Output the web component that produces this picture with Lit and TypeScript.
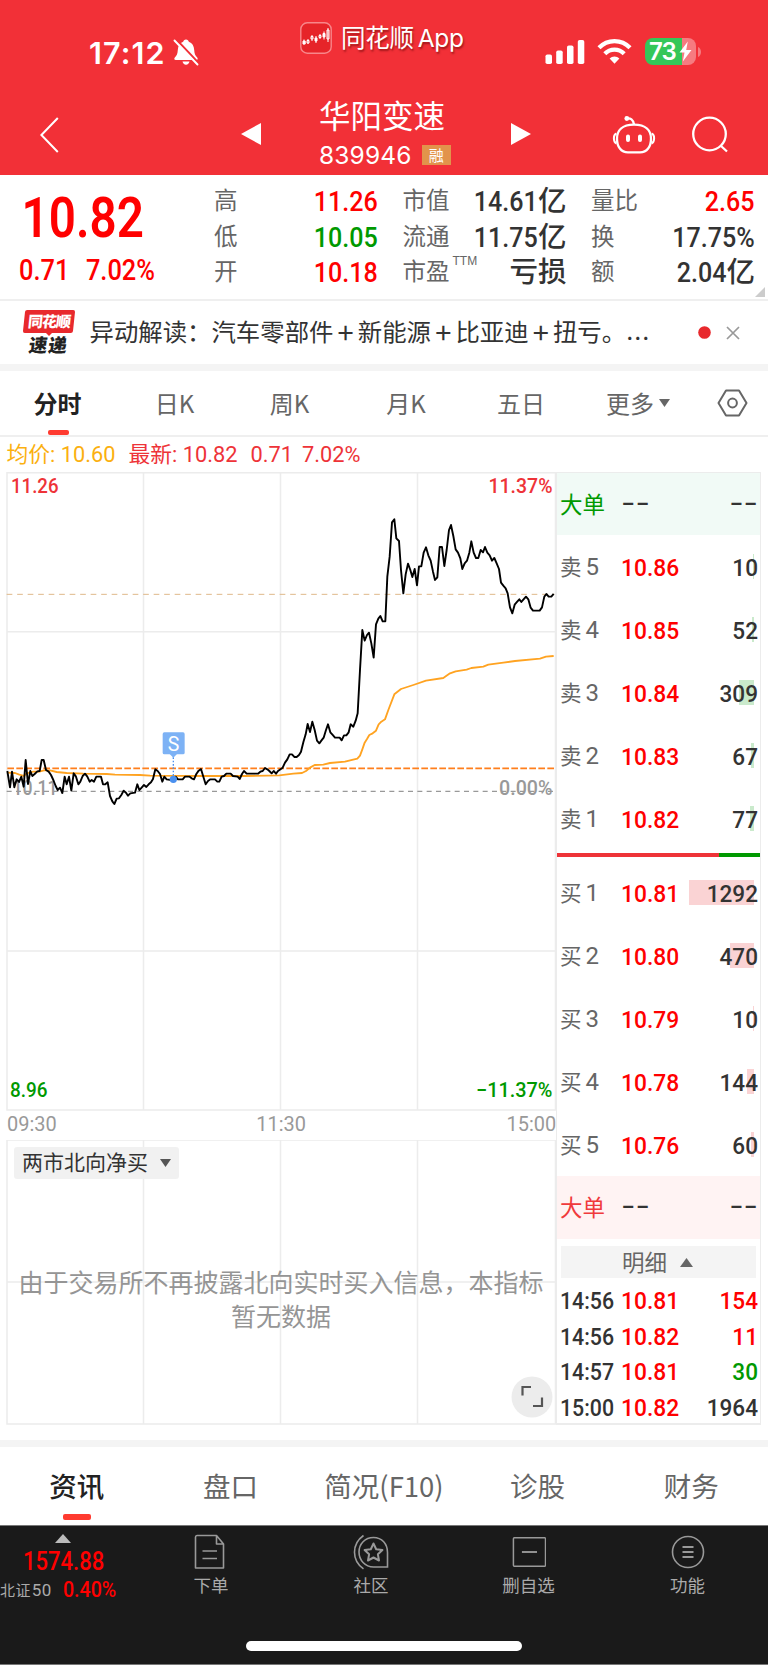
import { LitElement, html, svg, css } from "lit";
import { customElement } from "lit/decorators.js";
import { classMap } from "lit/directives/class-map.js";

// Price and average series, in thirds of a pixel inside the price chart.
const PRICE =
  "22,903 30,952 36,905 43,952 50,928 57,936 64,920 71,950 77,870 84,942 91,903 97,918 104,912 112,904 119,903 125,870 131,870 138,900 146,905 153,915 160,930 167,948 173,960 180,953 187,969 194,920 200,943 207,920 214,962 221,910 228,920 235,943 241,935 248,918 255,911 262,920 269,935 275,930 282,935 289,920 303,920 309,943 316,943 323,937 330,978 337,994 343,1002 350,986 357,985 364,975 371,962 378,968 384,977 391,970 405,968 412,943 418,960 425,953 432,945 439,951 446,943 453,937 459,927 466,898 473,903 480,912 487,935 493,920 500,928 514,930 520,928 527,920 534,928 548,928 555,920 569,920 575,925 582,928 589,912 596,902 603,897 610,920 617,943 624,933 631,928 645,928 652,935 658,935 665,920 672,918 679,911 692,911 699,918 713,920 719,927 726,912 732,903 740,911 774,911 781,905 788,903 795,894 802,898 808,903 815,910 821,903 828,911 834,903 848,893 855,878 862,868 869,853 876,853 883,861 890,861 897,855 903,845 910,817 917,793 923,762 930,786 937,755 944,780 951,812 958,820 964,812 971,803 978,780 984,763 991,787 998,795 1005,803 1019,803 1025,811 1032,796 1039,796 1046,787 1052,763 1060,770 1067,752 1073,730 1080,600 1087,480 1094,512 1101,495 1107,488 1114,520 1121,563 1128,463 1135,446 1141,438 1148,454 1156,454 1162,320 1169,260 1176,157 1183,148 1189,205 1197,213 1203,300 1210,370 1217,313 1224,281 1231,300 1237,321 1244,297 1251,346 1257,289 1264,289 1271,248 1278,232 1285,256 1292,272 1299,305 1305,330 1312,322 1319,231 1326,231 1333,288 1340,240 1347,180 1353,165 1360,198 1367,238 1374,248 1381,265 1387,297 1394,280 1401,272 1408,248 1414,214 1421,248 1428,264 1435,264 1442,240 1449,247 1455,231 1462,248 1469,256 1476,272 1483,264 1490,280 1497,297 1503,338 1510,347 1517,355 1523,370 1530,412 1537,430 1544,404 1551,396 1558,388 1564,396 1578,380 1585,388 1592,413 1599,422 1619,422 1626,412 1633,380 1639,372 1646,380 1654,380 1661,372";
const AVERAGE =
  "22,908 45,909 58,914 71,918 80,910 100,905 118,905 132,901 150,901 170,906 200,909 250,911 320,912 345,914 420,915 450,917 620,918 736,918 838,916 880,911 906,909 918,903 930,893 944,885 970,884 990,879 1035,875 1072,866 1080,857 1087,838 1094,818 1101,807 1108,795 1118,790 1128,782 1136,763 1144,755 1155,748 1165,720 1183,673 1203,657 1240,645 1278,632 1330,624 1350,610 1367,604 1400,599 1414,594 1450,590 1465,584 1510,578 1545,573 1620,566 1638,560 1661,558";

const ASKS = [
  ["5", "10.86", "10", 1], ["4", "10.85", "52", 2], ["3", "10.84", "309", 15],
  ["2", "10.83", "67", 3.3], ["1", "10.82", "77", 4],
] as const;
const BIDS = [
  ["1", "10.81", "1292", 65], ["2", "10.80", "470", 24], ["3", "10.79", "10", 1],
  ["4", "10.78", "144", 7], ["5", "10.76", "60", 3],
] as const;
const TRADES = [
  ["14:56", "10.81", "154", "up"], ["14:56", "10.82", "11", "up"],
  ["14:57", "10.81", "30", "down"], ["15:00", "10.82", "1964", ""],
] as const;

const shared = css`
  :host { display: block; }
  * { box-sizing: border-box; }
  svg { display: block; flex: none; }
  .up { color: #ff0000; }
  .down { color: #009900; }
`;

@customElement("status-header")
export class StatusHeader extends LitElement {
  static styles = [shared, css`
    .head { height: 174.500px; background: #f23037; color: #fff; overflow: hidden; }
    .status { display: flex; align-items: flex-start; height: 84px; padding-left: 89px; }
    .time { width: 84px; margin-top: 34.500px; font: 600 30.500px/36px Inter, sans-serif; letter-spacing: 1.1px; white-space: nowrap; }
    .bell { margin-top: 38px; }
    .appicon { margin: 22px 0 0 100px; }
    .appname { width: 124px; margin: 20px 0 0 9px; font: 400 24.500px/36px Inter, "Noto Sans CJK SC", sans-serif; letter-spacing: -0.3px; word-spacing: -2.500px; white-space: nowrap; text-shadow: 1px 2px 2px rgba(90, 0, 0, .55); }
    .signal { margin: 39.500px 0 0 80px; }
    .wifi { margin: 38px 0 0 12px; }
    .battery { position: relative; width: 51px; height: 27px; margin: 38px 0 0 13px; border-radius: 8px; background: linear-gradient(90deg, #34c759 73%, #f67b80 73%); }
    .pct { display: block; padding-left: 4px; font: 600 24px/27px Inter, sans-serif; letter-spacing: -1px; }
    .bolt { position: absolute; left: 34px; top: 3px; }
    .nub { margin: 47px 0 0 2px; }
    .nav { display: flex; align-items: flex-start; height: 90px; }
    .back { margin: 33px 0 0 39px; }
    .prev { margin: 39px 0 0 182px; }
    .title { width: 250px; }
    .name { height: 48px; margin: 6px 0 0 58px; font: 400 31.500px/48px "Noto Sans CJK SC", sans-serif; }
    .codes { display: flex; align-items: center; height: 22px; margin: 6px 0 0 58px; }
    .code { font: 400 24.500px/22px Inter, sans-serif; width: 103px; letter-spacing: 0.15px; }
    .tag { width: 28.500px; height: 20px; background: #e2934b; font: 400 15px/20px "Noto Sans CJK SC", sans-serif; text-align: center; }
    .next { margin-top: 39px; }
    .bot { margin: 31px 0 0 81px; }
    .find { margin: 32px 0 0 36px; }
  `];
  render() {
    return html`<div class="head">
      <div class="status">
        <div class="time">17:12</div>
        <svg class="bell" width="27" height="28" viewBox="0 0 27 28">
          <path fill="#fff" d="M13 1.5c-1.6 0-2.6 1-2.8 2.3C6.7 5 5 8 4.8 12c-.2 4-1 5.500-3 7.600-1 1.200-.5 2.400 1 2.400h20.400c1.500 0 2-1.200 1-2.400-2-2.100-2.800-3.600-3-7.600C21 8 19.300 5 15.800 3.800 15.600 2.500 14.600 1.500 13 1.500zM9.500 23.500h7c-.4 2-1.700 3.200-3.500 3.200s-3.100-1.200-3.500-3.200z"/>
          <path stroke="#f23037" stroke-width="2.2" d="M3.500 1.800 27 26.500"/><path stroke="#fff" stroke-width="1.900" stroke-linecap="round" d="M1.500 2.500 24.500 26.500"/>
        </svg>
        <svg class="appicon" width="32" height="32" viewBox="0 0 32 32">
          <rect x=".8" y=".8" width="30.400" height="30.400" rx="6.500" fill="#e62429" stroke="#f8868a" stroke-width="1.400"/>
          <g stroke="#fff" stroke-width="1"><path fill="#fff" d="M3 19h2.200v3H3zM15 16h2v3h-2zM23 11.500h2v3.500h-2z"/><path fill="none" d="M8 17v5M7 18.500h2v2.500H7zM12 13v6M11 14.500h2v2.500h-2zM20 12v5M19 13.500h2v2h-2zM28 6v14M27 8h2v9h-2zM4 17.500v5M16 14v7M24 9.500v8"/></g>
        </svg>
        <div class="appname">同花顺 App</div>
        <svg class="signal" width="40" height="24" viewBox="0 0 40 24" fill="#fff">
          <rect x="0.500" y="14.500" width="6.500" height="9.500" rx="1.800"/><rect x="11.200" y="10.500" width="6.500" height="13.500" rx="1.800"/><rect x="22" y="5.500" width="6.500" height="18.500" rx="1.800"/><rect x="32.800" y="0" width="6.500" height="24" rx="1.800"/>
        </svg>
        <svg class="wifi" width="35" height="26" viewBox="0 0 35 26" fill="none" stroke="#fff">
          <path stroke-width="4.200" d="M2 9.800C10.500.9 24.500.9 33 9.800"/><path stroke-width="4.200" d="M7.800 15.700c5.400-5.500 14-5.500 19.400 0"/><path fill="#fff" stroke="none" d="M17.500 25.800l-4.900-5.200c2.700-2.700 7.100-2.700 9.800 0z"/>
        </svg>
        <div class="battery"><span class="pct">73</span>
          <svg class="bolt" width="13" height="21" viewBox="0 0 13 21"><path fill="#fff" d="M8.800.5.5 11.500h5L3.800 20.500 12.500 9H7.200z"/></svg>
        </div>
        <svg class="nub" width="4" height="10"><path fill="#f67b80" d="M0 0c4 1.500 4 8.500 0 10z"/></svg>
      </div>
      <div class="nav">
        <svg class="back" width="20" height="36" viewBox="0 0 20 36"><path d="M18.800 1 2.400 18l16.400 17" fill="none" stroke="#fff" stroke-width="2"/></svg>
        <svg class="prev" width="20" height="22"><path fill="#fff" d="M20 0v22L0 11z"/></svg>
        <div class="title">
          <div class="name">华阳变速</div>
          <div class="codes"><span class="code">839946</span><span class="tag">融</span></div>
        </div>
        <svg class="next" width="20" height="22"><path fill="#fff" d="M0 0v22l20-11z"/></svg>
        <svg class="bot" width="44" height="40" viewBox="0 0 44 40" fill="none" stroke="#fff" stroke-width="2.300">
          <path d="M14.500 3.600c4-.8 6.800 1 7.500 5.900"/><circle cx="14.800" cy="3.500" r="2.400" fill="#fff" stroke="none"/>
          <path d="M22 9.700c12 0 17 6 17 14s-4 13.700-11 13.700H16c-7 0-11-5.700-11-13.700s5-14 17-14z"/>
          <path stroke-width="2" d="M4.500 18.500C1 19.500 1 27 4.500 28.500M39.500 18.500c3.500 1 3.500 8.500 0 10"/>
          <path stroke-width="4" stroke-linecap="round" d="M16 21.500v3.600M28 21.500v3.600"/>
        </svg>
        <svg class="find" width="38" height="38" viewBox="0 0 38 38" fill="none" stroke="#fff" stroke-width="2.300"><circle cx="17.500" cy="18" r="16.300"/><path d="M28.500 29.500l6.500 6"/></svg>
      </div>
    </div>`;
  }
}

@customElement("quote-summary")
export class QuoteSummary extends LitElement {
  static styles = [shared, css`
    .quote { position: relative; display: grid; grid-template-columns: 188.500px 163px 163px 163px; column-gap: 25.500px; height: 124.500px; padding-top: 9.500px; font-family: Roboto, "Noto Sans CJK SC", sans-serif; color: #333; }
    .last { padding: 1px 0 0 19px; white-space: nowrap; }
    .big { font-size: 55px; font-weight: 600; line-height: 66px; transform: scaleX(.865); transform-origin: 0 50%; padding-left: 3px; }
    .chg { display: flex; gap: 19px; font-size: 29px; font-weight: 500; line-height: 36px; margin-top: 1px; transform: scaleX(.875); transform-origin: 0 50%; }
    .cell { display: flex; justify-content: space-between; height: 35.500px; line-height: 35.500px; }
    .label { flex: none; font-size: 23.500px; color: #666; }
    .val { display: flex; min-width: 0; justify-content: flex-end; white-space: nowrap; font-size: 28.500px; font-weight: 500; margin-right: -1px; }
    .num { transform: scaleX(.88); transform-origin: 100% 50%; }
    .ttm { font-size: 12px; line-height: 12px; vertical-align: 15px; margin-left: 3px; font-family: "Liberation Sans", sans-serif; }
    .corner { position: absolute; left: 755px; top: 112px; }
    .rule { height: 2px; background: #efefef; }
  `];
  cell(label: unknown, num: string, unit = "", tone = "") {
    return html`<div class="cell"><span class="label">${label}</span><span class="val ${tone}">${num ? html`<span class="num">${num}</span>` : ""}${unit ? html`<span>${unit}</span>` : ""}</span></div>`;
  }
  render() {
    return html`<div class="quote">
      <div class="last up"><div class="big">10.82</div><div class="chg"><span>0.71</span><span>7.02%</span></div></div>
      <div>${this.cell("高", "11.26", "", "up")}${this.cell("低", "10.05", "", "down")}${this.cell("开", "10.18", "", "up")}</div>
      <div>${this.cell("市值", "14.61", "亿")}${this.cell("流通", "11.75", "亿")}${this.cell(html`市盈<span class="ttm">TTM</span>`, "", "亏损")}</div>
      <div>${this.cell("量比", "2.65", "", "up")}${this.cell("换", "17.75%")}${this.cell("额", "2.04", "亿")}</div>
      <svg class="corner" width="10" height="10"><path fill="#ccc" d="M10 0v10H0z"/></svg>
    </div><div class="rule"></div>`;
  }
}

@customElement("news-flash")
export class NewsFlash extends LitElement {
  static styles = [shared, css`
    .row { display: flex; align-items: center; height: 63px; padding-left: 22px; }
    .logo { display: flex; flex-direction: column; align-items: center; width: 53px; height: 45px; }
    .brand { width: 50px; height: 23px; border-radius: 2px; background: #e8292d; color: #fff; font: 900 15px/22px "Noto Sans CJK SC", sans-serif; transform: skewX(-6deg); text-align: center; letter-spacing: -1px; }
    .tip { margin-top: -1px; }
    .send { color: #222; font: 900 18.500px/18px "Noto Sans CJK SC", sans-serif; transform: skewX(-8deg); margin-top: -1px; letter-spacing: 1px; }
    .text { display: flex; flex: none; width: 623px; height: 36px; margin-top: -3px; padding-left: 14.500px; font: 400 24.400px/36px "Noto Sans CJK SC", sans-serif; color: #333; white-space: pre; }
    .plus { width: 24.400px; text-align: center; font-size: 29px; }
    .dots { font-family: Inter, sans-serif; letter-spacing: 1px; }
    .band { height: 7px; background: #f4f4f4; }
    .close { margin-left: 15px; }
  `];
  render() {
    const parts = ["异动解读：汽车零部件", "新能源", "比亚迪", "扭亏。"];
    return html`<div class="row">
      <div class="logo"><div class="brand">同花顺</div><svg class="tip" width="8" height="4"><path fill="#e8292d" d="M0 0h8L4 4z"/></svg><div class="send">速递</div></div>
      <div class="text">${parts.map((p, i) => html`${i ? html`<span class="plus">+</span>` : ""}<span>${p}</span>`)}<span class="dots">...</span></div>
      <svg width="13" height="13"><circle cx="6.500" cy="6.500" r="6.300" fill="#e8292d"/></svg>
      <svg class="close" width="14" height="14"><path d="M1 1l12 12M13 1 1 13" stroke="#999" stroke-width="1.700"/></svg>
    </div><div class="band"></div>`;
  }
}

@customElement("period-tabs")
export class PeriodTabs extends LitElement {
  static styles = [shared, css`
    .tabs { display: grid; grid-template-columns: 115px 119px 111px 122px 108px 126px 63px; height: 66px; border-bottom: 2px solid #efefef; font: 400 24px/66px "Noto Sans CJK SC", sans-serif; color: #666; }
    .tab { display: flex; justify-content: center; align-items: center; height: 64px; position: relative; }
    .on { color: #222; font-weight: 600; }
    .on::after { content: ""; position: absolute; left: 47.500px; bottom: 0; width: 21.500px; height: 5px; border-radius: 2px; background: #ff3b30; }
    .arrow { margin-left: 5px; }
  `];
  render() {
    return html`<div class="tabs">
      ${["分时", "日K", "周K", "月K", "五日"].map((t, i) => html`<div class=${classMap({ tab: true, on: i === 0 })}>${t}</div>`)}
      <div class="tab">更多<svg class="arrow" width="11" height="8"><path fill="#666" d="M0 0h11L5.500 8z"/></svg></div>
      <div class="tab"><svg width="31" height="28" viewBox="0 0 31 28" fill="none" stroke="#666" stroke-width="2"><path stroke-linejoin="round" d="M9 1.500h13L29.500 14 22 26.500H9L1.500 14z"/><circle cx="15.500" cy="14" r="4.400"/></svg></div>
    </div>`;
  }
}

@customElement("price-chart")
export class PriceChart extends LitElement {
  static styles = [shared, css`
    :host { width: 556px; }
    text { font-family: Roboto, sans-serif; }
    .lab { font-size: 20px; font-weight: 500; }
    .axis { display: flex; justify-content: space-between; height: 28px; padding: 0 0 0 7px; font: 400 21px/25px Roboto, sans-serif; color: #999; }
    .axis span { transform: scaleX(.95); }
    .axis span:first-child { transform-origin: 0 50%; }
    .axis span:last-child { transform-origin: 100% 50%; }
    .north { position: relative; height: 286px; }
    .grid { position: absolute; inset: 0; }
    .chip { position: relative; display: flex; align-items: center; width: 164.500px; height: 32px; margin-left: 14px; background: rgba(240, 240, 240, .92); border-radius: 3px; padding-left: 8px; font: 400 21px/29px "Noto Sans CJK SC", sans-serif; color: #333; }
    .chip span { margin-top: -3px; }
    .chip svg { margin-left: 12px; }
    .pad { height: 7px; }
    .msg { position: relative; margin: 84.500px 0 0 6px; text-align: center; color: #959595; font: 400 25px/34.500px "Noto Sans CJK SC", sans-serif; white-space: nowrap; }
    .expand { position: absolute; left: 511px; top: 236px; }
  `];
  render() {
    const cols = [143.5, 280.5, 417.5];
    return html`
      <svg width="556" height="642" viewBox="0 0 556 642">
        <path fill="none" stroke="#ececec" stroke-width="1.500" d="M7 2.700H555.500V640H7zM7 161.800H555.500M7 481H555.500"/>
        ${cols.map(x => svg`<path stroke="#ececec" stroke-width="1.500" d="M${x} 3V640"/>`)}
        <g transform="scale(.33333)" fill="none">
          <path stroke="#dfb889" stroke-width="3" stroke-dasharray="17 14.500" d="M20 373H1663"/>
          <path stroke="#999" stroke-width="4" stroke-dasharray="15 13" d="M20 964H1667"/>
        </g>
        <g class="lab" fill="#999">
          <text x="12.500" y="324.500" textLength="45" lengthAdjust="spacingAndGlyphs">10.11</text>
          <text x="499" y="324.500" textLength="53.500" lengthAdjust="spacingAndGlyphs">0.00%</text>
        </g>
        <g transform="scale(.33333)" fill="none" stroke-linejoin="round">
          <path stroke="#ff7f1c" stroke-width="5.500" stroke-dasharray="20 7" d="M22 895H1663"/>
          <polyline stroke="#ffa321" stroke-width="5.500" points=${AVERAGE}/>
          <polyline stroke="#000" stroke-width="5.700" points=${PRICE}/>
          <path stroke="#4a90ef" stroke-width="4" stroke-dasharray="5 5" d="M520 862V922"/>
          <circle cx="520" cy="928" r="11" fill="#4a90ef"/>
          <rect x="488" y="787" width="66" height="66" rx="5" fill="#7db2f5"/><path fill="#7db2f5" d="M509 852h22l-11 11z"/>
        </g>
        <text x="173.500" y="280.500" fill="#fff" font-size="19.500" text-anchor="middle">S</text>
        <g class="lab">
          <text x="11" y="22.800" fill="#ee3338" textLength="47.500" lengthAdjust="spacingAndGlyphs">11.26</text>
          <text x="488.500" y="22.800" fill="#ee3338" textLength="64" lengthAdjust="spacingAndGlyphs">11.37%</text>
          <text x="10" y="627" fill="#009900" textLength="37.500" lengthAdjust="spacingAndGlyphs">8.96</text>
          <text x="476" y="627" fill="#009900" textLength="76.500" lengthAdjust="spacingAndGlyphs">−11.37%</text>
        </g>
      </svg>
      <div class="axis"><span>09:30</span><span>11:30</span><span>15:00</span></div>
      <div class="north">
        <svg class="grid" width="556" height="286"><path fill="none" stroke="#ececec" stroke-width="1.500" d="M7 0V284H555.500V0M7 142H555.500M143.500 0V284M280.500 0V284M417.500 0V284M7 0H556"/></svg>
        <div class="pad"></div>
        <div class="chip"><span>两市北向净买</span><svg width="11" height="8"><path fill="#555" d="M0 0h11L5.500 8z"/></svg></div>
        <div class="msg">由于交易所不再披露北向实时买入信息，本指标<br>暂无数据</div>
        <svg class="expand" width="42" height="42" viewBox="0 0 42 42"><circle cx="21" cy="21" r="20.500" fill="#ececec"/><path fill="none" stroke="#555" stroke-width="2.200" d="M11.500 19.500V11H20M22 30h9V21.500"/></svg>
      </div>`;
  }
}

@customElement("order-book")
export class OrderBook extends LitElement {
  static styles = [shared, css`
    .panel { margin-top: 2px; width: 205px; height: 953px; border: 1.500px solid #ececec; border-width: 1px 1.500px 2px 1px; font-family: Roboto, "Noto Sans CJK SC", sans-serif; color: #333; }
    .row { display: grid; grid-template-columns: 61px 60px 1fr; height: 63px; line-height: 65px; padding: 0 2px 0 3px; position: relative; white-space: nowrap; }
    .lv { font-size: 21.500px; color: #666; }
    .lv span { font-size: 24px; margin-left: 4px; }
    .px { font-size: 24.500px; font-weight: 500; color: #ff0000; transform: scaleX(.93); transform-origin: 0 50%; }
    .vol { font-size: 24.500px; font-weight: 500; text-align: right; transform: scaleX(.92); transform-origin: 100% 50%; position: relative; }
    .bar { position: absolute; right: 6px; top: 18.500px; height: 25px; }
    .sell .bar { background: #caeacc; }
    .buy .bar { background: #fad3d4; }
    .whale { font-size: 22.500px; }
    .whale.s { background: #f1faf6; height: 62px; }
    .whale.b { background: #fff3f3; height: 63px; }
    .whale.s .tag { color: #009900; }
    .whale.b .tag { color: #f03a3c; }
    .dash { font-family: Inter, sans-serif; font-weight: 400; font-size: 29px; line-height: 60px; transform: scaleX(1.08); transform-origin: 0 50%; }
    .dash.r { text-align: right; transform-origin: 100% 50%; }
    .split { display: flex; height: 4px; margin: 3px 0 4px; }
    .split i { width: 162px; background: #ee3338; }
    .split b { flex: 1; background: #009900; }
    .detail { display: flex; justify-content: center; align-items: center; height: 32px; margin: 7px 4px 4px 4px; padding-right: 2px; background: #f4f4f4; color: #666; font: 400 22.500px/29px "Noto Sans CJK SC", sans-serif; }
    .detail span { margin-top: -2px; }
    .detail svg { margin-left: 13px; }
    .row.trade { height: 35.700px; line-height: 37.700px; }
    .tm { font-size: 24.500px; font-weight: 500; transform: scaleX(.87); transform-origin: 0 50%; }
  `];
  level(side: string, l: readonly [string, string, string, number]) {
    return html`<div class="row"><span class="bar" style="width:${l[3]}px"></span><span class="lv">${side}<span>${l[0]}</span></span><span class="px">${l[1]}</span><span class="vol">${l[2]}</span></div>`;
  }
  whale(kind: string) {
    return html`<div class="row whale ${kind}"><span class="tag">大单</span><span class="dash">--</span><span class="dash r">--</span></div>`;
  }
  render() {
    return html`<div class="panel">
      ${this.whale("s")}
      <div class="sell">${ASKS.map(l => this.level("卖", l))}</div>
      <div class="split"><i></i><b></b></div>
      <div class="buy">${BIDS.map(l => this.level("买", l))}</div>
      ${this.whale("b")}
      <div class="detail"><span>明细</span><svg width="13" height="9"><path fill="#666" d="M0 9h13L6.500 0z"/></svg></div>
      ${TRADES.map(t => html`<div class="row trade"><span class="tm">${t[0]}</span><span class="px">${t[1]}</span><span class="vol ${t[3]}">${t[2]}</span></div>`)}
    </div>`;
  }
}

@customElement("bottom-dock")
export class BottomDock extends LitElement {
  static styles = [shared, css`
    .band { height: 7px; background: #f4f4f4; }
    .tabs { display: grid; grid-template-columns: repeat(5, 1fr); height: 78px; font: 400 27.500px/76px "Noto Sans CJK SC", sans-serif; color: #666; text-align: center; }
    .tab { position: relative; }
    .on { color: #222; font-weight: 500; }
    .on::after { content: ""; position: absolute; left: 63px; top: 67px; width: 28px; height: 5.500px; border-radius: 2px; background: #ff3b30; }
    .dock { height: 139px; background: #1a1a1a; border-top: 1px solid #777; }
    .items { display: grid; grid-template-columns: 132px 158px 162px 153px 165px; height: 115px; }
    .index { color: #ff0000; font-family: Roboto, "Noto Sans CJK SC", sans-serif; padding-top: 8px; white-space: nowrap; }
    .index svg { margin-left: 55px; }
    .pt { font-size: 25px; line-height: 26px; margin: 5.500px 0 0 23px; transform: scaleX(.88); transform-origin: 0 50%; font-weight: 500; }
    .sub { display: flex; align-items: center; height: 26px; margin-top: 2px; }
    .nm { width: 63px; color: #aaa; font-size: 15px; line-height: 26px; padding-top: 2px; letter-spacing: .4px; }
    .nm span { font-size: 17px; margin-left: 1px; }
    .rt { font-size: 21.500px; line-height: 26px; transform: scaleX(.91); transform-origin: 0 50%; font-weight: 500; }
    .item { padding-top: 8px; display: flex; flex-direction: column; align-items: center; font: 400 17.500px/26px "Noto Sans CJK SC", sans-serif; color: #aaa; }
    .item span { margin-top: 2px; }
    .item svg { fill: none; stroke: #999; stroke-width: 1.600; }
    .home { width: 276px; height: 9.500px; border-radius: 5px; background: #fff; margin: 0 auto; }
    .end { height: 1px; background: #777; }
  `];
  render() {
    return html`<div class="band"></div>
      <div class="tabs">${["资讯", "盘口", "简况(F10)", "诊股", "财务"].map((t, i) => html`<div class=${classMap({ tab: true, on: i === 0 })}>${t}</div>`)}</div>
      <div class="dock">
        <div class="items">
          <div class="index"><svg width="16" height="9"><path fill="#bbb" d="M0 9h16L8 0z"/></svg><div class="pt">1574.88</div><div class="sub"><span class="nm">北证<span>50</span></span><span class="rt">0.40%</span></div></div>
          <div class="item"><svg width="36" height="36" viewBox="0 0 36 36"><path stroke-linejoin="round" d="M4 1.500h19.500l7 8.500v24H2.500V3.200Q2.500 1.500 4 1.500zM23.500 1.500V10h7M9.500 17h14.500M9.500 24.500h14.500"/></svg><span>下单</span></div>
          <div class="item"><svg width="38" height="36" viewBox="0 0 38 36"><path d="M21.500 3.500C13 3.500 7 10 7 18s6 15 14.500 15H35.500V18.500C35.500 10 30 3.500 21.500 3.500zM11.500 1.500C-.5 10-.5 26.500 11.500 34.800"/><path stroke-linejoin="round" stroke-width="2" d="M21.500 9.500l2.700 5.700 6.200.8-4.500 4.300 1.100 6.200-5.500-3-5.500 3 1.100-6.200-4.500-4.300 6.200-.8z"/></svg><span>社区</span></div>
          <div class="item"><svg width="34" height="36" viewBox="0 0 36 36"><rect x="1.500" y="3" width="34" height="30" rx="1"/><path stroke-width="2" d="M10.500 18h16"/></svg><span>删自选</span></div>
          <div class="item"><svg width="34" height="36" viewBox="0 0 34 36"><circle cx="17" cy="18" r="15.500"/><path stroke-width="1.800" d="M11.500 13h11M11.500 18h11M11.500 23h11"/></svg><span>功能</span></div>
        </div>
        <div class="home"></div>
      </div><div class="end"></div>`;
  }
}

@customElement("app-root")
export class AppRoot extends LitElement {
  static styles = [shared, css`
    :host { width: 768px; height: 1665px; overflow: hidden; background: #fff; }
    .legend { display: flex; height: 33px; padding-left: 6.500px; font: 400 21.800px/36px Roboto, "Noto Sans CJK SC", sans-serif; color: #ee3338; white-space: nowrap; }
    .avg { width: 122px; color: #fbb010; }
    .now { width: 122px; }
    .d { width: 51.500px; }
    .body { display: flex; height: 970px; }
  `];
  render() {
    return html`<status-header></status-header>
      <quote-summary></quote-summary>
      <news-flash></news-flash>
      <period-tabs></period-tabs>
      <div class="legend"><span class="avg">均价: 10.60</span><span class="now">最新: 10.82</span><span class="d">0.71</span><span>7.02%</span></div>
      <div class="body"><price-chart></price-chart><order-book></order-book></div>
      <bottom-dock></bottom-dock>`;
  }
}
